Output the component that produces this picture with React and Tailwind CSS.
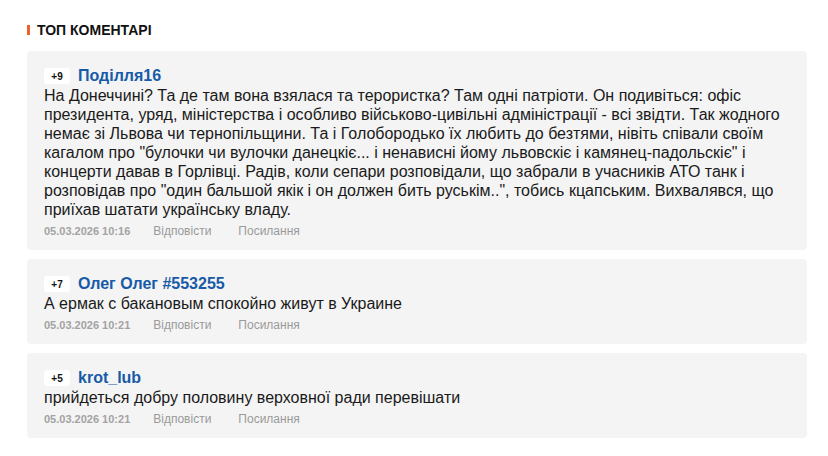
export default function App() {
  const comments = [
    {
      score: "+9",
      name: "Поділля16",
      date: "05.03.2026 10:16",
      text:
        "На Донеччині? Та де там вона взялася та терористка? Там одні патріоти. Он подивіться: офіс президента, уряд, міністерства і особливо військово-цивільні адміністрації - всі звідти. Так жодного немає зі Львова чи тернопільщини. Та і Голобородько їх любить до безтями, нівіть співали своїм кагалом про \"булочки чи вулочки данецкіє... і ненависні йому львовскіє і камянец-падольскіє\" і концерти давав в Горлівці. Радів, коли сепари розповідали, що забрали в учасників АТО танк і розповідав про \"один бальшой якік і он должен бить руськім..\", тобись кцапським. Вихвалявся, що приїхав шатати українську владу.",
    },
    {
      score: "+7",
      name: "Олег Олег #553255",
      date: "05.03.2026 10:21",
      text: "А ермак с бакановым спокойно живут в Украине",
    },
    {
      score: "+5",
      name: "krot_lub",
      date: "05.03.2026 10:21",
      text: "прийдеться добру половину верховної ради перевішати",
    },
  ];
  return (
    <div className="w-[828px] h-[456px] bg-white font-['Liberation_Sans',Arial,sans-serif] text-[#222]">
      <div className="pt-[22px] pl-[27px] pr-[21px]">
        <div className="flex items-center h-[16px]">
          <div className="w-[3px] h-[10px] bg-[#f0622d]" />
          <div className="ml-[7px] text-[14px] font-bold text-[#111] leading-[16px]">ТОП КОМЕНТАРІ</div>
        </div>
        <div className="mt-[13px] flex flex-col gap-[9px]">
          {comments.map((c, i) => (
            <div key={i} className="bg-[#f4f4f4] rounded-[4px] pt-[15px] px-[17px] pb-[11px]">
              <div className="flex items-center h-5">
                <span className="bg-white rounded-[3px] w-[26px] h-4 flex items-center justify-center text-[10px] font-bold text-[#111]">
                  {c.score}
                </span>
                <span className="ml-[8px] text-[16px] font-bold text-[#175aa7] leading-5">{c.name}</span>
              </div>
              <div className="text-[16px] leading-[19px] text-[#1a1a1a]">{c.text}</div>
              <div className="mt-[5px] flex items-baseline text-[12px] leading-[15px] text-[#9a9a9a]">
                <span className="mr-[23px] text-[11px] font-bold text-[#a3a3a3]">{c.date}</span>
                <span className="mr-[27px]">Відповісти</span>
                <span>Посилання</span>
              </div>
            </div>
          ))}
        </div>
      </div>
    </div>
  );
}
